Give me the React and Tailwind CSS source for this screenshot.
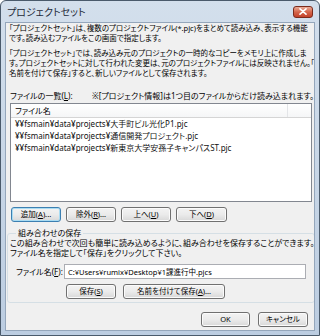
import React from 'react';

const Btn = ({ children, className = '', focus = false }) => (
  <div
    className={`h-[15px] flex items-center justify-center rounded-[3px] border bg-linear-to-b from-[#f3f3f3] via-[#ebebeb] to-[#d8d8d8] text-[7.5px] leading-none text-black whitespace-nowrap ${
      focus
        ? 'border-[#3c7fb1] shadow-[inset_0_0_0_1px_#a9dcf3]'
        : 'border-[#707070] shadow-[inset_0_0_0_1px_#fbfbfb]'
    } ${className}`}
  >
    {children}
  </div>
);

const Key = ({ children }) => <span className="underline">{children}</span>;

const files = [
  '¥¥fsmain¥data¥projects¥大手町ビル光化P1.pjc',
  '¥¥fsmain¥data¥projects¥通信開発プロジェクト.pjc',
  '¥¥fsmain¥data¥projects¥新東京大学安孫子キャンパスST.pjc',
];

export default function App() {
  return (
    <div className="w-[320px] h-[336px] flex flex-col bg-linear-to-b from-[#d3dfec] to-[#bccde1] border border-[#4a5a6b] rounded-t-[6px] overflow-hidden font-['Noto_Sans','Noto_Sans_CJK_JP',sans-serif] [font-feature-settings:'palt'] text-black">
      {/* Title bar */}
      <div className="h-[21px] shrink-0 flex items-center justify-between pl-[6px] pr-[6px]">
        <span className="text-[10px] leading-none text-[#1d2a38]">プロジェクトセット</span>
        <div className="w-[20px] h-[12px] rounded-[3px] border border-[#7b2b1c] bg-linear-to-b from-[#e8ab98] via-[#d5654a] to-[#c2412a] flex items-center justify-center">
          <svg width="8" height="7" viewBox="0 0 8 7">
            <path d="M1 0.8 L7 6.2 M7 0.8 L1 6.2" stroke="#fff" strokeWidth="1.6" strokeLinecap="round" />
          </svg>
        </div>
      </div>

      {/* Client area */}
      <div className="flex-1 mx-[4px] mb-[4px] bg-[#f0f0f0] border border-[#94a6bb] flex flex-col pl-[3px] text-[8px] leading-[10px] overflow-hidden">
        <div className="whitespace-nowrap text-[7.5px]">
          <div>「プロジェクトセット」は、複数のプロジェクトファイル(*.pjc)をまとめて読み込み、表示する機能</div>
          <div>です。読み込むファイルをこの画面で指定します。</div>
        </div>
        <div className="mt-[5px] whitespace-nowrap text-[7.5px]">
          <div>「プロジェクトセット」では、読み込み元のプロジェクトの一時的なコピーをメモリ上に作成しま</div>
          <div>す。プロジェクトセットに対して行われた変更は、元のプロジェクトファイルには反映されません。「</div>
          <div>名前を付けて保存」すると、新しいファイルとして保存されます。</div>
        </div>

        <div className="mt-[13px] ml-[1px] flex whitespace-nowrap">
          <span className="w-[90px]">
            ファイルの一覧(<Key>L</Key>):
          </span>
          <span>※[プロジェクト情報]は1つ目のファイルからだけ読み込まれます。</span>
        </div>

        {/* List box */}
        <div className="mt-[2px] ml-[1px] w-[302px] h-[99px] bg-white border border-[#828790] flex flex-col">
          <div className="h-[14px] flex border-b border-[#d5d5d5] bg-linear-to-b from-white to-[#f5f6f7]">
            <div className="w-[277px] border-r border-[#e3e5e8] pl-[4px] flex items-center">ファイル名</div>
            <div className="flex-1" />
          </div>
          <div className="flex flex-col">
            {files.map((f) => (
              <div key={f} className="h-[12px] leading-[12px] pl-[4px] whitespace-nowrap text-[#111]">
                {f}
              </div>
            ))}
          </div>
        </div>

        {/* List buttons */}
        <div className="mt-[5px] ml-[2px] flex gap-[5px]">
          <Btn focus className="w-[50px]">
            追加(<Key>A</Key>)...
          </Btn>
          <Btn className="w-[50px]">
            除外(<Key>R</Key>)...
          </Btn>
          <Btn className="w-[50px]">
            上へ(<Key>U</Key>)
          </Btn>
          <Btn className="w-[51px]">
            下へ(<Key>D</Key>)
          </Btn>
        </div>

        {/* Group box */}
        <fieldset className="mt-[6px] -ml-[2px] w-[304px] border border-[#d5dfe5] rounded-[3px] pl-[2px] pb-[3px]">
          <legend className="ml-[6px] px-[2px] leading-[10px]">組み合わせの保存</legend>
          <div className="whitespace-nowrap">
            <div>この組み合わせで次回も簡単に読み込めるように、組み合わせを保存することができます。</div>
            <div>ファイル名を指定して「保存」をクリックして下さい。</div>
          </div>
          <div className="mt-[6px] flex items-center">
            <span className="w-[54px] pl-[6px] whitespace-nowrap">
              ファイル名(<Key>F</Key>):
            </span>
            <div className="w-[242px] h-[15px] bg-white border border-[#abadb3] flex items-center pl-[3px] text-[7.5px] whitespace-nowrap">
              C:¥Users¥rumix¥Desktop¥1課進行中.pjcs
            </div>
          </div>
          <div className="mt-[5px] ml-[56px] flex gap-[7px]">
            <Btn className="w-[50px]">
              保存(<Key>S</Key>)
            </Btn>
            <Btn className="w-[102px]">
              名前を付けて保存(<Key>A</Key>)...
            </Btn>
          </div>
        </fieldset>

        {/* Dialog buttons */}
        <div className="mt-[9px] flex justify-end gap-[8px] pr-[6px]">
          <Btn className="w-[49px] h-[14px]">OK</Btn>
          <Btn className="w-[50px] h-[14px]">キャンセル</Btn>
        </div>
      </div>
    </div>
  );
}
